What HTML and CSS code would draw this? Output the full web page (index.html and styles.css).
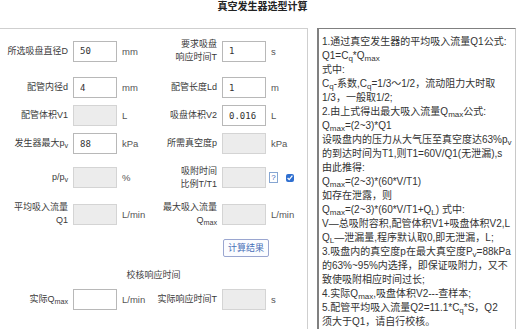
FILE: index.html
```html
<!DOCTYPE html>
<html lang="zh-CN">
<head>
    <meta charset="UTF-8">
    <meta name="viewport" content="width=device-width, initial-scale=1.0">
    <title>真空发生器选型计算</title>
    <link rel="stylesheet" href="styles.css">
</head>
<body>
    <h1 class="title">真空发生器选型计算</h1>
    <div class="layout">
        <div class="calc-panel">
            <form class="calc-grid" id="calcForm">
                <label class="field-label">所选吸盘直径D</label>
                <input class="num" value="50">
                <span class="unit">mm</span>
                <label class="field-label">要求吸盘<br>响应时间T</label>
                <input class="num" value="1">
                <span class="unit">s</span>

                <label class="field-label">配管内径d</label>
                <input class="num" value="4">
                <span class="unit">mm</span>
                <label class="field-label">配管长度Ld</label>
                <input class="num" value="1">
                <span class="unit">m</span>

                <label class="field-label">配管体积V1</label>
                <input class="num" disabled>
                <span class="unit">L</span>
                <label class="field-label">吸盘体积V2</label>
                <input class="num" value="0.016">
                <span class="unit">L</span>

                <label class="field-label">发生器最大p<sub>v</sub></label>
                <input class="num" value="88">
                <span class="unit">kPa</span>
                <label class="field-label">所需真空度p</label>
                <input class="num" disabled>
                <span class="unit">kPa</span>

                <label class="field-label">p/p<sub>v</sub></label>
                <input class="num" disabled>
                <span class="unit">%</span>
                <label class="field-label">吸附时间<br>比例T/T1</label>
                <input class="num" disabled>
                <span class="unit unit-tools">
                    <span class="help">?</span>
                    <input type="checkbox" class="check" checked>
                </span>

                <label class="field-label">平均吸入流量<br>Q1</label>
                <input class="num" disabled>
                <span class="unit">L/min</span>
                <label class="field-label">最大吸入流量<br>Q<sub>max</sub></label>
                <input class="num" disabled>
                <span class="unit">L/min</span>

                <button type="submit" class="calc-btn">计算结果</button>

                <div class="section-title">校核响应时间</div>

                <label class="field-label">实际Q<sub>max</sub></label>
                <input class="num">
                <span class="unit">L/min</span>
                <label class="field-label">实际响应时间T</label>
                <input class="num" disabled>
                <span class="unit">s</span>
            </form>
        </div>
        <div class="notes">
            <p>1.通过真空发生器的平均吸入流量Q1公式:<br>
            Q1=C<sub>q</sub>*Q<sub>max</sub><br>
            式中:<br>
            C<sub>q</sub>-系数,C<sub>q</sub>=1/3～1/2，流动阻力大时取<br>
            1/3，一般取1/2;</p>
            <p>2.由上式得出最大吸入流量Q<sub>max</sub>公式:<br>
            Q<sub>max</sub>=(2~3)*Q1<br>
            设吸盘内的压力从大气压至真空度达63%p<sub>v</sub><br>
            的到达时间为T1,则T1=60V/Q1(无泄漏),s<br>
            由此推得:<br>
            Q<sub>max</sub>=(2~3)*(60*V/T1)<br>
            如存在泄露，则<br>
            Q<sub>max</sub>=(2~3)*(60*V/T1+Q<sub>L</sub>) 式中:<br>
            V—总吸附容积,配管体积V1+吸盘体积V2,L<br>
            Q<sub>L</sub>—泄漏量,程序默认取0,即无泄漏，L;</p>
            <p>3.吸盘内的真空度p在最大真空度P<sub>v</sub>=88kPa<br>
            的63%~95%内选择，即保证吸附力，又不<br>
            致使吸附相应时间过长;</p>
            <p>4.实际Q<sub>max</sub>,吸盘体积V2---查样本;</p>
            <p>5.配管平均吸入流量Q2=11.1*C<sub>q</sub>*S，Q2<br>
            须大于Q1，请自行校核。</p>
        </div>
    </div>

    <script>
        document.getElementById('calcForm').addEventListener('submit', (e) => {
            e.preventDefault();
        });
    </script>
</body>
</html>
```

FILE: styles.css
```css
* {
    margin: 0;
    padding: 0;
    box-sizing: border-box;
}

body {
    font-family: "Liberation Sans", "Noto Sans CJK SC", sans-serif;
    color: #333;
    background: #fff;
    overflow: hidden;
}

sub {
    font-size: 0.8em;
    line-height: 0;
    vertical-align: -0.25em;
}

.title {
    font-size: 10px;
    line-height: 14px;
    font-weight: bold;
    text-align: center;
    color: #222;
    padding-left: 5px;
    margin-bottom: 14px;
}

.layout {
    display: flex;
    gap: 9px;
    align-items: flex-start;
}

.calc-panel {
    width: 308px;
    height: 320px;
    padding-top: 3px;
    border-top: 1px solid #cfcfcf;
    border-right: 1px solid #cfcfcf;
}

.calc-grid {
    display: grid;
    grid-template-columns: 68px 44px 30px 60px 44px 1fr;
    grid-template-rows: 38px 21px 21px 21px 33px 26px 27px 14px 21px;
    column-gap: 5px;
    row-gap: 7px;
    align-items: center;
}

.field-label {
    font-size: 9px;
    line-height: 13px;
    text-align: right;
    color: #3a3a3a;
}

.num {
    width: 44px;
    height: 21px;
    border: 1px solid #b8b8b8;
    background: #fff;
    padding-left: 6px;
    font: 9px "DejaVu Sans Mono", monospace;
    color: #333;
    outline: none;
}

.num:disabled {
    background: #ececec;
    border-color: #d4d4d4;
}

.unit {
    font-size: 9.5px;
    color: #555;
}

.unit-tools {
    display: flex;
    align-items: center;
    gap: 8px;
    margin-left: -2px;
}

.help {
    width: 9px;
    height: 11px;
    border: 1px solid #86a6d2;
    color: #3a68b8;
    font-size: 8px;
    line-height: 9px;
    text-align: center;
}

.check {
    width: 8px;
    height: 8px;
    margin: 0;
    accent-color: #2f6fd0;
}

.calc-btn {
    grid-column: 5;
    width: 46px;
    height: 18px;
    margin-left: 1px;
    border: 1px solid #9aa6d0;
    border-radius: 2px;
    background: #fbfcff;
    color: #4a70b8;
    font-family: "Liberation Sans", "Noto Sans CJK SC", sans-serif;
    font-size: 9px;
    cursor: pointer;
}

.section-title {
    grid-column: 1 / -1;
    text-align: center;
    font-size: 9px;
    line-height: 14px;
    color: #444;
}

.notes {
    width: 199px;
    padding: 6px 0 12px 3px;
    border: 1px solid #c8c8c8;
    border-top-color: #808080;
    border-left: 2px solid #808080;
    font-size: 10px;
    line-height: 14px;
    color: #333;
    white-space: nowrap;
    overflow: hidden;
}
```
